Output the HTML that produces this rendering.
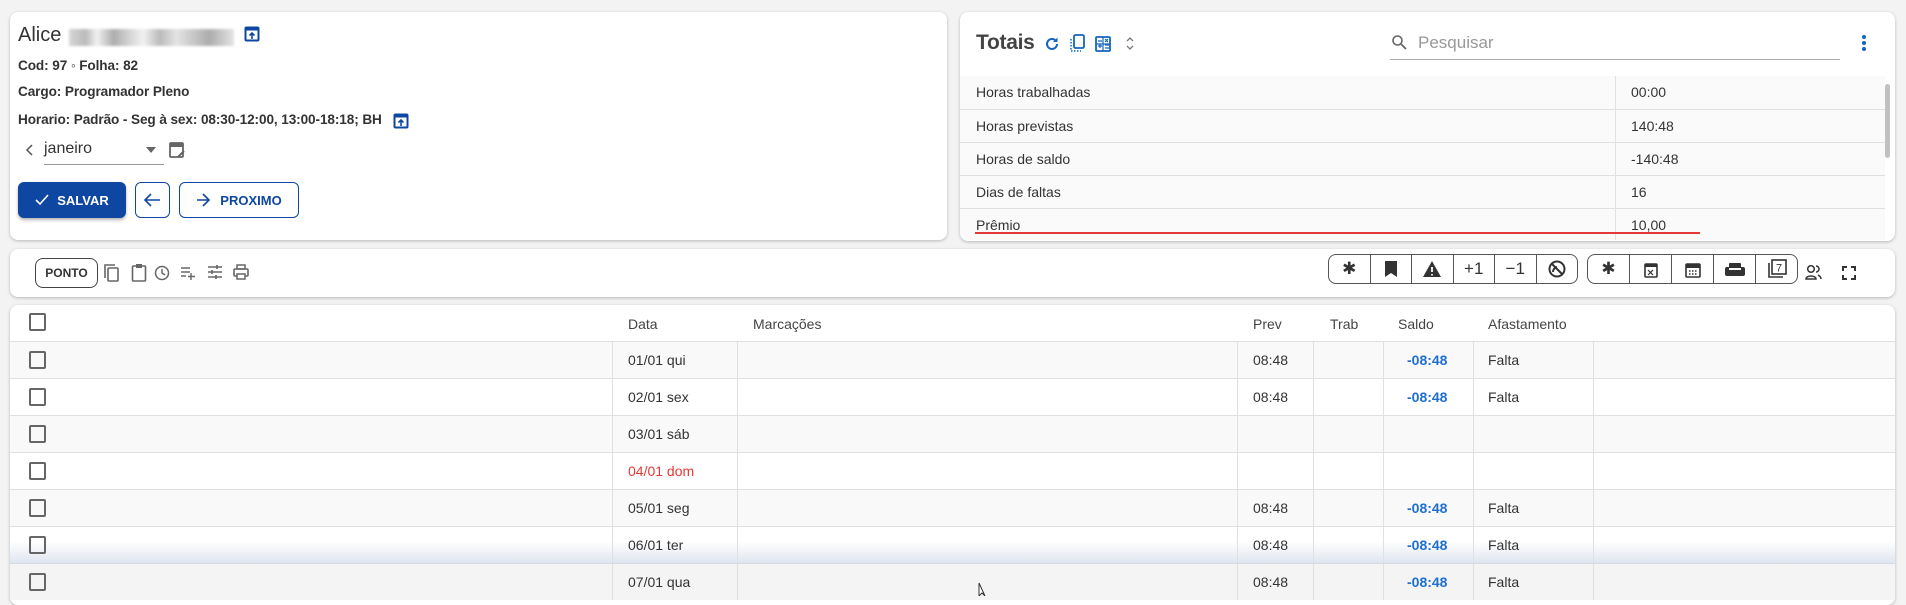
<!DOCTYPE html>
<html><head><meta charset="utf-8"><style>
*{box-sizing:border-box;margin:0;padding:0}
body{width:1906px;height:596px;background:#f3f3f3;font-family:"Liberation Sans",sans-serif;color:#333;position:relative;overflow:hidden}
.card{position:absolute;background:#fff;border-radius:8px;box-shadow:0 1px 3px rgba(0,0,0,.25)}
.a{position:absolute}
.t{position:absolute;white-space:nowrap}
svg{position:absolute}
.seg{position:absolute;top:254px;height:30px;border:1px solid #555;border-radius:8px;display:flex;background:#fff}
.seg div{flex:1;border-left:1px solid #555;display:flex;align-items:center;justify-content:center;font-size:17px;color:#333}
.seg div:first-child{border-left:none}
.row{position:absolute;left:10px;width:1885px;height:37px;border-top:1px solid #e0e0e0;font-size:14px}
.cb{position:absolute;left:19px;top:9px;width:17px;height:18px;border:2px solid #666;border-radius:2px}
.vl{position:absolute;top:0;bottom:0;width:1px;background:#e0e0e0}
.trow{position:absolute;left:960px;width:925px;height:33px;border-top:1px solid #e0e0e0;font-size:14px;background:#fafafa}
.info{position:absolute;left:18px;font-size:13.6px;font-weight:bold;color:#333;white-space:nowrap;letter-spacing:-.1px}
</style></head><body>

<!-- left card -->
<div class="card" style="left:10px;top:12px;width:937px;height:228px"></div>
<div class="t" style="left:18px;top:24px;font-size:20px;color:#333">Alice</div>
<div class="a" style="left:69px;top:29px;width:165px;height:17px;background:linear-gradient(90deg,#ccc,#aaa 10%,#eee 17%,#999 27%,#ccc 37%,#eee 45%,#aaa 55%,#ddd 65%,#bbb 75%,#999 85%,#ddd);filter:blur(1.2px);opacity:.8"></div>
<svg style="left:244px;top:26px" width="16" height="16" viewBox="0 0 16 16"><rect x="1.5" y="1.5" width="13" height="13" rx="1" fill="none" stroke="#0d47a1" stroke-width="2"/><rect x="1.5" y="1.5" width="13" height="3" fill="#0d47a1"/><path d="M8 13V7M5.5 9.5L8 7l2.5 2.5" stroke="#0d47a1" stroke-width="1.6" fill="none"/></svg>
<div class="info" style="top:58px">Cod: 97 ◦ Folha: 82</div>
<div class="info" style="top:84px">Cargo: Programador Pleno</div>
<div class="info" style="top:112px">Horario: Padrão - Seg à sex: 08:30-12:00, 13:00-18:18; BH</div>
<svg style="left:393px;top:113px" width="16" height="16" viewBox="0 0 16 16"><rect x="1.5" y="1.5" width="13" height="13" rx="1" fill="none" stroke="#0d47a1" stroke-width="2"/><rect x="1.5" y="1.5" width="13" height="3" fill="#0d47a1"/><path d="M8 13V7M5.5 9.5L8 7l2.5 2.5" stroke="#0d47a1" stroke-width="1.6" fill="none"/></svg>
<svg style="left:25px;top:144px" width="10" height="12" viewBox="0 0 10 12"><path d="M7 1L2 6l5 5" stroke="#555" stroke-width="1.5" fill="none"/></svg>
<div class="t" style="left:44px;top:140px;font-size:16px;color:#333">janeiro</div>
<svg style="left:146px;top:147px" width="10" height="6"><path d="M0 0h10L5 6z" fill="#666"/></svg>
<div class="a" style="left:44px;top:164px;width:120px;height:1px;background:#999"></div>
<svg style="left:168px;top:140px" width="18" height="20" viewBox="0 0 18 20"><rect x="2" y="3" width="13" height="14" rx="1" fill="none" stroke="#666" stroke-width="1.8"/><rect x="2" y="3" width="13" height="4" fill="#666"/><path d="M10 17l6-6" stroke="#666" stroke-width="2"/></svg>
<div class="a" style="left:18px;top:182px;width:108px;height:36px;background:#0d47a1;border-radius:6px;box-shadow:0 2px 3px rgba(0,0,0,.3);color:#fff;font-weight:bold;font-size:13px;display:flex;align-items:center;justify-content:center;gap:8px"><svg style="position:static" width="14" height="12"><path d="M1 6l4 4 8-9" stroke="#fff" stroke-width="1.6" fill="none"/></svg>SALVAR</div>
<div class="a" style="left:135px;top:182px;width:35px;height:36px;border:1px solid #0d47a1;border-radius:6px"></div>
<svg style="left:143px;top:192px" width="18" height="16"><path d="M17 8H2M8 2L2 8l6 6" stroke="#0d47a1" stroke-width="1.6" fill="none"/></svg>
<div class="a" style="left:179px;top:182px;width:120px;height:36px;border:1px solid #0d47a1;border-radius:6px;color:#0d47a1;font-weight:bold;font-size:13px;display:flex;align-items:center;justify-content:center;gap:10px"><svg style="position:static" width="14" height="14"><path d="M1 7h12M7 1l6 6-6 6" stroke="#0d47a1" stroke-width="1.6" fill="none"/></svg>PROXIMO</div>

<!-- right card -->
<div class="card" style="left:960px;top:12px;width:935px;height:229px;overflow:hidden"></div>
<div class="t" style="left:976px;top:31px;font-size:21px;font-weight:bold;color:#444;letter-spacing:-.3px">Totais</div>
<svg style="left:1044px;top:36px" width="16" height="16" viewBox="0 0 16 16"><path d="M13 8a5 5 0 1 1-1.5-3.6" stroke="#1565c0" stroke-width="2" fill="none"/><path d="M13.5 1.5v4.5H9z" fill="#1565c0"/></svg>
<svg style="left:1069px;top:34px" width="17" height="19" viewBox="0 0 17 19"><rect x="5" y="1" width="10" height="13" rx="1.5" fill="none" stroke="#1565c0" stroke-width="1.8"/><path d="M2 5v12h10" stroke="#1565c0" stroke-width="1.5" stroke-dasharray="1.5 1.5" fill="none"/></svg>
<svg style="left:1095px;top:36px" width="16" height="16" viewBox="0 0 16 16"><rect x="1" y="1" width="14" height="14" rx="1" fill="none" stroke="#1565c0" stroke-width="1.8"/><path d="M3 5h4M3 10h4M5 8v4M10 9h4M10 12h4M10 3l3 3M13 3l-3 3M8 1v14M1 8h14" stroke="#1565c0" stroke-width="1.2"/></svg>
<svg style="left:1125px;top:35px" width="10" height="17"><path d="M2 6l3-3 3 3M2 11l3 3 3-3" stroke="#777" stroke-width="1.3" fill="none"/></svg>
<svg style="left:1391px;top:34px" width="16" height="16"><circle cx="6.5" cy="6.5" r="4.5" stroke="#666" stroke-width="1.6" fill="none"/><path d="M10 10l5 5" stroke="#666" stroke-width="1.8"/></svg>
<div class="t" style="left:1418px;top:33px;font-size:17px;color:#999">Pesquisar</div>
<div class="a" style="left:1390px;top:59px;width:450px;height:1px;background:#aaa"></div>
<svg style="left:1861px;top:34px" width="6" height="18"><circle cx="3" cy="3" r="2" fill="#1565c0"/><circle cx="3" cy="9" r="2" fill="#1565c0"/><circle cx="3" cy="15" r="2" fill="#1565c0"/></svg>
<div class="trow" style="top:76px;border-top:none"><span class="t" style="left:16px;top:8px">Horas trabalhadas</span><span class="t" style="left:671px;top:8px">00:00</span><div class="vl" style="left:655px"></div></div>
<div class="trow" style="top:109px"><span class="t" style="left:16px;top:8px">Horas previstas</span><span class="t" style="left:671px;top:8px">140:48</span><div class="vl" style="left:655px"></div></div>
<div class="trow" style="top:142px"><span class="t" style="left:16px;top:8px">Horas de saldo</span><span class="t" style="left:671px;top:8px">-140:48</span><div class="vl" style="left:655px"></div></div>
<div class="trow" style="top:175px"><span class="t" style="left:16px;top:8px">Dias de faltas</span><span class="t" style="left:671px;top:8px">16</span><div class="vl" style="left:655px"></div></div>
<div class="trow" style="top:208px;height:32px;border-bottom-left-radius:8px"><span class="t" style="left:16px;top:8px">Prêmio</span><span class="t" style="left:671px;top:8px">10,00</span><div class="vl" style="left:655px"></div></div>
<div class="a" style="left:975px;top:232px;width:725px;height:2px;background:#e53935"></div>
<div class="a" style="left:1885px;top:84px;width:5px;height:74px;background:#c1c1c1;border-radius:3px"></div>

<!-- toolbar -->
<div class="card" style="left:10px;top:249px;width:1885px;height:48px"></div>
<div class="a" style="left:35px;top:258px;width:63px;height:30px;border:1px solid #444;border-radius:8px;font-size:12px;font-weight:bold;color:#333;display:flex;align-items:center;justify-content:center">PONTO</div>
<svg style="left:103px;top:263px" width="18" height="20" viewBox="0 0 18 20"><rect x="5" y="5" width="10" height="13" rx="1" fill="none" stroke="#666" stroke-width="1.6"/><path d="M2 15V2h10" stroke="#666" stroke-width="1.6" fill="none"/></svg>
<svg style="left:131px;top:263px" width="16" height="19"><rect x="1.5" y="3" width="13" height="15" rx="1" fill="none" stroke="#666" stroke-width="1.6"/><rect x="5" y="1" width="6" height="4" fill="#666"/></svg>
<svg style="left:154px;top:265px" width="16" height="16"><circle cx="8" cy="8" r="6.5" stroke="#666" stroke-width="1.5" fill="none"/><path d="M8 4v4l3 2" stroke="#666" stroke-width="1.5" fill="none"/></svg>
<svg style="left:181px;top:266px" width="14" height="14"><path d="M0 2h9M0 6h9M0 10h5M10 7v7M7 10.5h7" stroke="#666" stroke-width="1.4"/></svg>
<svg style="left:208px;top:265px" width="14" height="14"><path d="M0 2h14M0 7h14M0 12h14" stroke="#666" stroke-width="1.4"/><path d="M9 0v4M4 5v4M8 10v4" stroke="#666" stroke-width="1.6"/></svg>
<svg style="left:233px;top:264px" width="16" height="16"><rect x="4" y="1" width="8" height="4" fill="none" stroke="#666" stroke-width="1.5"/><rect x="1" y="5" width="14" height="7" rx="1" fill="none" stroke="#666" stroke-width="1.6"/><rect x="4" y="10" width="8" height="5" fill="#fff" stroke="#666" stroke-width="1.5"/></svg>

<div class="seg" style="left:1328px;width:250px">
<div>✱</div>
<div><svg style="position:static" width="12" height="16"><path d="M0 0h12v16l-6-4-6 4z" fill="#333"/></svg></div>
<div><svg style="position:static" width="18" height="16"><path d="M9 0l9 16H0z" fill="#333"/><path d="M9 6v5M9 13v1.5" stroke="#fff" stroke-width="1.8"/></svg></div>
<div>+1</div><div>−1</div>
<div><svg style="position:static" width="18" height="18"><circle cx="9" cy="9" r="7.5" stroke="#333" stroke-width="2" fill="none"/><path d="M4 4l10 10" stroke="#333" stroke-width="2"/><path d="M5 12a5 5 0 0 1 4-5" stroke="#333" stroke-width="2" fill="none"/></svg></div>
</div>
<div class="seg" style="left:1587px;width:211px">
<div>✱</div>
<div><svg style="position:static" width="14" height="17"><rect x="1" y="3" width="12" height="13" rx="1" fill="none" stroke="#333" stroke-width="1.6"/><rect x="1" y="3" width="12" height="3" fill="#333"/><path d="M4 9l5 5M9 9l-5 5" stroke="#333" stroke-width="1.2"/></svg></div>
<div><svg style="position:static" width="16" height="17"><rect x="1" y="3" width="14" height="13" rx="1" fill="none" stroke="#333" stroke-width="1.6"/><rect x="1" y="3" width="14" height="4" fill="#333"/><path d="M4 10h8M4 13h8" stroke="#333" stroke-width="1.4" stroke-dasharray="1.5 1.5"/></svg></div>
<div><svg style="position:static" width="20" height="13"><rect x="0" y="4" width="20" height="9" rx="2" fill="#333"/><rect x="4" y="0" width="12" height="6" rx="1" fill="#333"/><rect x="4" y="5" width="12" height="2" fill="#fff"/></svg></div>
<div><svg style="position:static" width="20" height="20"><rect x="5" y="1" width="14" height="14" fill="none" stroke="#333" stroke-width="1.6"/><path d="M2 4v14h14" stroke="#333" stroke-width="1.6" fill="none"/><text x="9" y="12.5" font-size="11" font-family="Liberation Sans" fill="#333">7</text></svg></div>
</div>
<svg style="left:1805px;top:264px" width="18" height="16"><circle cx="6" cy="5" r="3.3" stroke="#333" stroke-width="1.5" fill="none"/><path d="M1 15c0-4 10-4 10 0z" stroke="#333" stroke-width="1.5" fill="none"/><path d="M11 2a3 3 0 0 1 0 6M13 11c2 1 3 2 3 4" stroke="#333" stroke-width="1.5" fill="none"/></svg>
<svg style="left:1842px;top:266px" width="14" height="14"><path d="M1 5V1h4M9 1h4v4M13 9v4H9M5 13H1V9" stroke="#333" stroke-width="2" fill="none"/></svg>

<!-- main table -->
<div class="card" style="left:10px;top:305px;width:1885px;height:300px;overflow:hidden"></div>
<div class="cb" style="left:29px;top:313px"></div>
<div class="t" style="left:628px;top:316px;font-size:14px;color:#444">Data</div>
<div class="t" style="left:753px;top:316px;font-size:14px;color:#444">Marcações</div>
<div class="t" style="left:1253px;top:316px;font-size:14px;color:#444">Prev</div>
<div class="t" style="left:1330px;top:316px;font-size:14px;color:#444">Trab</div>
<div class="t" style="left:1398px;top:316px;font-size:14px;color:#444">Saldo</div>
<div class="t" style="left:1488px;top:316px;font-size:14px;color:#444">Afastamento</div>

<div class="row" style="top:341px;background:#f9f9f9"><div class="cb"></div><div class="vl" style="left:602px"></div><div class="vl" style="left:727px"></div><div class="vl" style="left:1227px"></div><div class="vl" style="left:1303px"></div><div class="vl" style="left:1373px"></div><div class="vl" style="left:1463px"></div><div class="vl" style="left:1583px"></div><span class="t" style="left:618px;top:10px">01/01 qui</span><span class="t" style="left:1243px;top:10px">08:48</span><span class="t" style="left:1397px;top:10px;color:#1e6fd0;font-weight:bold">-08:48</span><span class="t" style="left:1478px;top:10px">Falta</span></div>
<div class="row" style="top:378px;background:#fff"><div class="cb"></div><div class="vl" style="left:602px"></div><div class="vl" style="left:727px"></div><div class="vl" style="left:1227px"></div><div class="vl" style="left:1303px"></div><div class="vl" style="left:1373px"></div><div class="vl" style="left:1463px"></div><div class="vl" style="left:1583px"></div><span class="t" style="left:618px;top:10px">02/01 sex</span><span class="t" style="left:1243px;top:10px">08:48</span><span class="t" style="left:1397px;top:10px;color:#1e6fd0;font-weight:bold">-08:48</span><span class="t" style="left:1478px;top:10px">Falta</span></div>
<div class="row" style="top:415px;background:#f9f9f9"><div class="cb"></div><div class="vl" style="left:602px"></div><div class="vl" style="left:727px"></div><div class="vl" style="left:1227px"></div><div class="vl" style="left:1303px"></div><div class="vl" style="left:1373px"></div><div class="vl" style="left:1463px"></div><div class="vl" style="left:1583px"></div><span class="t" style="left:618px;top:10px">03/01 sáb</span></div>
<div class="row" style="top:452px;background:#fff"><div class="cb"></div><div class="vl" style="left:602px"></div><div class="vl" style="left:727px"></div><div class="vl" style="left:1227px"></div><div class="vl" style="left:1303px"></div><div class="vl" style="left:1373px"></div><div class="vl" style="left:1463px"></div><div class="vl" style="left:1583px"></div><span class="t" style="left:618px;top:10px;color:#e53935">04/01 dom</span></div>
<div class="row" style="top:489px;background:#f9f9f9"><div class="cb"></div><div class="vl" style="left:602px"></div><div class="vl" style="left:727px"></div><div class="vl" style="left:1227px"></div><div class="vl" style="left:1303px"></div><div class="vl" style="left:1373px"></div><div class="vl" style="left:1463px"></div><div class="vl" style="left:1583px"></div><span class="t" style="left:618px;top:10px">05/01 seg</span><span class="t" style="left:1243px;top:10px">08:48</span><span class="t" style="left:1397px;top:10px;color:#1e6fd0;font-weight:bold">-08:48</span><span class="t" style="left:1478px;top:10px">Falta</span></div>
<div class="row" style="top:526px;background:linear-gradient(#fff 40%,#dfe5ef)"><div class="cb"></div><div class="vl" style="left:602px"></div><div class="vl" style="left:727px"></div><div class="vl" style="left:1227px"></div><div class="vl" style="left:1303px"></div><div class="vl" style="left:1373px"></div><div class="vl" style="left:1463px"></div><div class="vl" style="left:1583px"></div><span class="t" style="left:618px;top:10px">06/01 ter</span><span class="t" style="left:1243px;top:10px">08:48</span><span class="t" style="left:1397px;top:10px;color:#1e6fd0;font-weight:bold">-08:48</span><span class="t" style="left:1478px;top:10px">Falta</span></div>
<div class="row" style="top:563px;background:#f4f4f4;border-top-color:#d5dbe6"><div class="cb"></div><div class="vl" style="left:602px"></div><div class="vl" style="left:727px"></div><div class="vl" style="left:1227px"></div><div class="vl" style="left:1303px"></div><div class="vl" style="left:1373px"></div><div class="vl" style="left:1463px"></div><div class="vl" style="left:1583px"></div><span class="t" style="left:618px;top:10px">07/01 qua</span><span class="t" style="left:1243px;top:10px">08:48</span><span class="t" style="left:1397px;top:10px;color:#1e6fd0;font-weight:bold">-08:48</span><span class="t" style="left:1478px;top:10px">Falta</span></div>
<svg style="left:978px;top:582px" width="14" height="14"><path d="M1 1v13l3-3 3 3z" fill="#fff" stroke="#333" stroke-width="1"/></svg>
</body></html>
